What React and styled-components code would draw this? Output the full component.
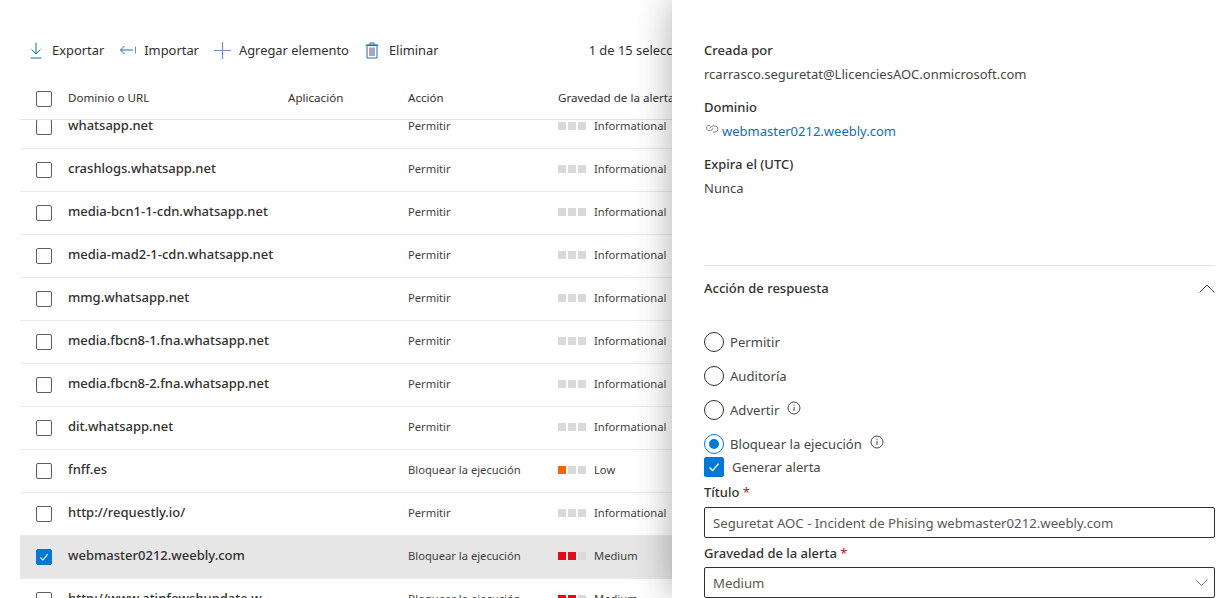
import React from "react";
import styled, { createGlobalStyle } from "styled-components";

const GlobalStyle = createGlobalStyle`
  html, body { margin: 0; padding: 0; background: #fff; }
  body { font-family: "Noto Sans", "Open Sans", sans-serif; color: #323130; }
  * { box-sizing: border-box; }
`;

const Page = styled.div`
  position: relative;
  width: 1221px;
  height: 598px;
  overflow: hidden;
  background: #fff;
`;

const Main = styled.div`
  width: 672px;
  padding: 0 0 0 20px;
`;

const Toolbar = styled.div`
  height: 78px;
  padding: 22px 0 0 10px;
  display: flex;
  align-items: center;
  font-size: 12.9px;
  color: #323130;
  white-space: nowrap;
`;

const ToolButton = styled.div`
  display: flex;
  align-items: center;
  flex: none;
  gap: ${(p) => p.$gap}px;
  margin-right: ${(p) => p.$mr}px;
`;

const Selected = styled.div`
  margin-left: 150px;
  flex: none;
`;

const HeaderRow = styled.div`
  display: grid;
  grid-template-columns: 32px 220px 120px 150px 1fr;
  align-items: center;
  height: 42px;
  padding-left: 16px;
  border-bottom: 1px solid #e4e4e4;
  font-size: 11.6px;
  color: #323130;
  white-space: nowrap;
  overflow: hidden;
`;

const HeaderText = styled.span`
  padding-bottom: 2px;
`;

const List = styled.div`
  height: 478px;
  overflow: hidden;
`;

const ListInner = styled.div`
  margin-top: -14px;
`;

const Row = styled.div`
  display: grid;
  grid-template-columns: 32px 220px 120px 150px 1fr;
  align-items: center;
  height: 43px;
  padding-left: 16px;
  background: ${(p) => (p.$selected ? "#e6e6e6" : "#fff")};
  border-bottom: 1px solid #e9e9e9;
  white-space: nowrap;
`;

const Box = styled.span`
  width: 16px;
  height: 16px;
  border-radius: 2px;
  border: 1px solid ${(p) => (p.$checked ? "#0078d4" : "#605e5c")};
  background: ${(p) => (p.$checked ? "#0078d4" : "transparent")};
  display: flex;
  align-items: center;
  justify-content: center;
  flex: none;
`;

const Name = styled.span`
  font-size: 13px;
  font-weight: 500;
  color: #323130;
  padding-bottom: 5px;
`;

const Cell = styled.span`
  font-size: 11.2px;
  color: #3f3e3d;
  padding-bottom: 3px;
`;

const Severity = styled.span`
  display: flex;
  align-items: center;
  font-size: 11.2px;
  color: #3f3e3d;
  padding-bottom: 3px;
`;

const Squares = styled.span`
  display: flex;
  gap: 2px;
  margin-right: 8px;
`;

const Square = styled.i`
  display: block;
  width: 8px;
  height: 8px;
  background: ${(p) => p.$color};
`;

const Panel = styled.aside`
  position: absolute;
  top: 0;
  right: 0;
  bottom: 0;
  width: 549px;
  padding: 41px 6px 0 32px;
  background: #fff;
  box-shadow: 0 0 36px rgba(0, 0, 0, 0.32);
`;

const FieldLabel = styled.div`
  font-size: 13px;
  font-weight: 500;
  line-height: 18px;
  color: #323130;
`;

const FieldValue = styled.div`
  font-size: 13px;
  line-height: 18px;
  margin: 6px 0 ${(p) => p.$mb}px;
  color: #484644;
  display: flex;
  align-items: center;
  gap: 3px;
`;

const LinkText = styled.span`
  color: #106ebe;
`;

const LinkIcon = styled.svg`
  margin-bottom: 4px;
`;

const Divider = styled.div`
  height: 1px;
  background: #e4e4e4;
  margin: 68px 0 0;
`;

const SectionHead = styled.div`
  height: 44px;
  display: flex;
  align-items: center;
  justify-content: space-between;
  font-size: 13px;
  font-weight: 500;
  color: #323130;
  margin-bottom: 22px;
`;

const RadioRow = styled.div`
  display: flex;
  align-items: center;
  height: 20px;
  margin-bottom: ${(p) => p.$mb ?? 14}px;
  font-size: 13.1px;
  color: #484644;
`;

const Radio = styled.span`
  width: 20px;
  height: 20px;
  border-radius: 50%;
  border: 1px solid ${(p) => (p.$on ? "#0078d4" : "#323130")};
  margin-right: 6px;
  display: flex;
  align-items: center;
  justify-content: center;
  flex: none;
  &::after {
    content: "";
    display: ${(p) => (p.$on ? "block" : "none")};
    width: 10px;
    height: 10px;
    border-radius: 50%;
    background: #0078d4;
  }
`;

const Info = styled.svg`
  margin: 0 0 4px 8px;
`;

const CheckRow = styled.div`
  display: flex;
  align-items: center;
  height: 20px;
  font-size: 13px;
  color: #484644;
  gap: 8px;
`;

const BigBox = styled(Box)`
  width: 20px;
  height: 20px;
`;

const Label = styled.div`
  font-size: 13px;
  font-weight: 500;
  line-height: 18px;
  margin: ${(p) => p.$mt}px 0 ${(p) => p.$mb}px;
  color: #323130;
`;

const Required = styled.span`
  color: #a4262c;
  font-weight: 400;
`;

const Input = styled.div`
  height: 31px;
  width: 511px;
  border: 1px solid #323130;
  border-radius: 2px;
  padding: 0 6px 0 8px;
  display: flex;
  align-items: center;
  justify-content: space-between;
  font-size: 13.2px;
  color: #5a5856;
  white-space: nowrap;
`;

const rows = [
  { name: "whatsapp.net", action: "Permitir", sev: "Informational" },
  { name: "crashlogs.whatsapp.net", action: "Permitir", sev: "Informational" },
  { name: "media-bcn1-1-cdn.whatsapp.net", action: "Permitir", sev: "Informational" },
  { name: "media-mad2-1-cdn.whatsapp.net", action: "Permitir", sev: "Informational" },
  { name: "mmg.whatsapp.net", action: "Permitir", sev: "Informational" },
  { name: "media.fbcn8-1.fna.whatsapp.net", action: "Permitir", sev: "Informational" },
  { name: "media.fbcn8-2.fna.whatsapp.net", action: "Permitir", sev: "Informational" },
  { name: "dit.whatsapp.net", action: "Permitir", sev: "Informational" },
  { name: "fnff.es", action: "Bloquear la ejecución", sev: "Low" },
  { name: "http://requestly.io/", action: "Permitir", sev: "Informational" },
  { name: "webmaster0212.weebly.com", action: "Bloquear la ejecución", sev: "Medium", selected: true },
  { name: "http://www.atinfowshupdate.w", action: "Bloquear la ejecución", sev: "Medium" },
];

const grey = "#d9d9d9";
const sevColors = {
  Informational: [grey, grey, grey],
  Low: ["#f7630c", grey, grey],
  Medium: ["#e00b1c", "#e00b1c", grey],
};

const Check = ({ size = 10 }) => (
  <svg width={size} height={size} viewBox="0 0 10 10" fill="none">
    <path d="M1.2 5.4 L3.9 8 L8.8 2.2" stroke="#fff" strokeWidth="1.1" />
  </svg>
);

const InfoIcon = () => (
  <Info width="14" height="14" viewBox="0 0 14 14" fill="none">
    <circle cx="7" cy="7" r="6" stroke="#484644" />
    <path d="M7 6v4M7 3.6v1.2" stroke="#484644" />
  </Info>
);

export default function App() {
  return (
    <Page>
      <GlobalStyle />
      <Main>
        <Toolbar>
          <ToolButton $gap={10} $mr={16}>
            <svg width="12" height="17" viewBox="0 0 12 17" fill="none">
              <path d="M6 0.5V12M1.5 7.5L6 12L10.5 7.5" stroke="#0f6cbd" />
              <path d="M0.5 16h11" stroke="#0f6cbd" />
            </svg>
            Exportar
          </ToolButton>
          <ToolButton $gap={8} $mr={15}>
            <svg width="16" height="10" viewBox="0 0 16 10" fill="none">
              <path d="M0.5 5H13M4.5 1L0.5 5L4.5 9" stroke="#0f6cbd" />
              <path d="M15.5 1.5v7" stroke="#8a8886" />
            </svg>
            Importar
          </ToolButton>
          <ToolButton $gap={8} $mr={16}>
            <svg width="17" height="17" viewBox="0 0 17 17" fill="none">
              <path d="M8.5 0v17M0 8.5h17" stroke="#6f8fcf" strokeWidth="1.2" />
            </svg>
            Agregar elemento
          </ToolButton>
          <ToolButton $gap={10} $mr={0}>
            <svg width="14" height="17" viewBox="0 0 14 17" fill="none">
              <path d="M0.5 3h13M5 3V1h4v2" stroke="#0f6cbd" />
              <path d="M2 3.5h10V16H2z" stroke="#0f6cbd" />
              <rect x="4" y="5.5" width="6" height="8.5" fill="#a9a4c4" />
            </svg>
            Eliminar
          </ToolButton>
          <Selected>1 de 15 seleccionados</Selected>
        </Toolbar>
        <HeaderRow>
          <Box />
          <HeaderText>Dominio o URL</HeaderText>
          <HeaderText>Aplicación</HeaderText>
          <HeaderText>Acción</HeaderText>
          <HeaderText>Gravedad de la alerta</HeaderText>
        </HeaderRow>
        <List>
          <ListInner>
            {rows.map((r) => (
              <Row key={r.name} $selected={r.selected}>
                <Box $checked={r.selected}>{r.selected && <Check />}</Box>
                <Name>{r.name}</Name>
                <span />
                <Cell>{r.action}</Cell>
                <Severity>
                  <Squares>
                    {sevColors[r.sev].map((c, i) => (
                      <Square key={i} $color={c} />
                    ))}
                  </Squares>
                  {r.sev}
                </Severity>
              </Row>
            ))}
          </ListInner>
        </List>
      </Main>
      <Panel>
        <FieldLabel>Creada por</FieldLabel>
        <FieldValue $mb={15}>rcarrasco.seguretat@LlicenciesAOC.onmicrosoft.com</FieldValue>
        <FieldLabel>Dominio</FieldLabel>
        <FieldValue $mb={15}>
          <LinkIcon width="15" height="10" viewBox="0 0 15 10" fill="none">
            <path d="M6 1.5H4a3 3 0 0 0 0 5h2.5a3 3 0 0 0 2.5-2.5" stroke="#8a8886" />
            <path d="M6 4.5a3 3 0 0 1 3-2.5h2a3 3 0 0 1 0 6H9" stroke="#8a8886" />
          </LinkIcon>
          <LinkText>webmaster0212.weebly.com</LinkText>
        </FieldValue>
        <FieldLabel>Expira el (UTC)</FieldLabel>
        <FieldValue $mb={0}>Nunca</FieldValue>
        <Divider />
        <SectionHead>
          Acción de respuesta
          <svg width="16" height="9" viewBox="0 0 16 9" fill="none">
            <path d="M0.5 8.5L8 1L15.5 8.5" stroke="#484644" />
          </svg>
        </SectionHead>
        <RadioRow><Radio />Permitir</RadioRow>
        <RadioRow><Radio />Auditoría</RadioRow>
        <RadioRow><Radio />Advertir<InfoIcon /></RadioRow>
        <RadioRow $mb={3}><Radio $on />Bloquear la ejecución<InfoIcon /></RadioRow>
        <CheckRow>
          <BigBox $checked><Check size={12} /></BigBox>
          Generar alerta
        </CheckRow>
        <Label $mt={6} $mb={6}>Título <Required>*</Required></Label>
        <Input>Seguretat AOC - Incident de Phising webmaster0212.weebly.com</Input>
        <Label $mt={6} $mb={5}>Gravedad de la alerta <Required>*</Required></Label>
        <Input>
          Medium
          <svg width="13" height="7" viewBox="0 0 13 7" fill="none">
            <path d="M0.5 0.5L6.5 6.5L12.5 0.5" stroke="#8a8886" />
          </svg>
        </Input>
      </Panel>
    </Page>
  );
}
